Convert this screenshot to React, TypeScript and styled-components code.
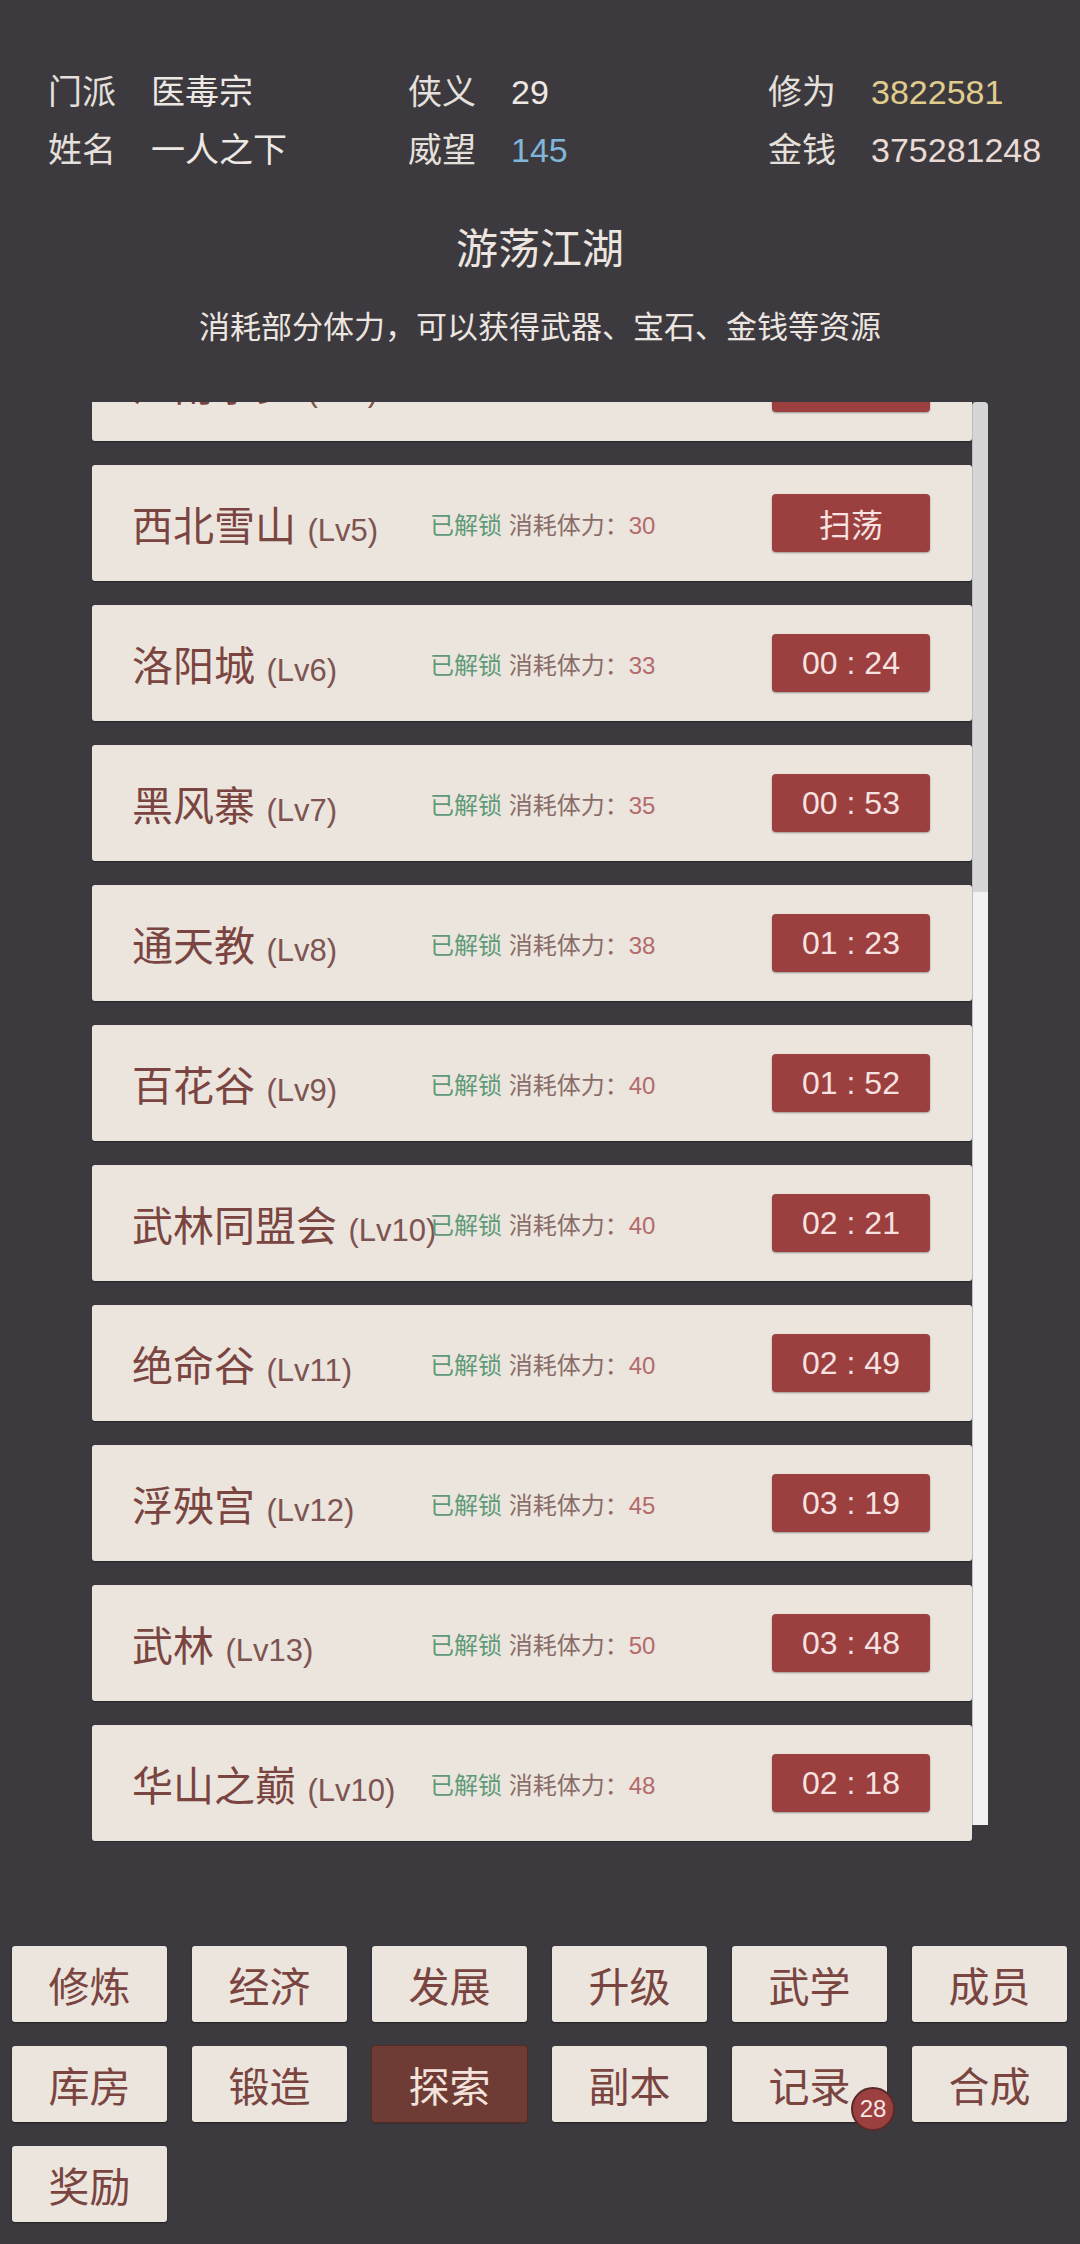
import { useLayoutEffect, useRef } from "react";
import styled, { createGlobalStyle } from "styled-components";

const GlobalStyle = createGlobalStyle`
	html, body {
		margin: 0;
		padding: 0;
		background: #3c3a3e;
	}

	body {
		font-family: "Liberation Sans", "Noto Sans CJK SC", sans-serif;
		color: #ebe4df;
	}
`;

const StyledPage = styled.div`
	width: 1080px;
	min-height: 2244px;
	padding-top: 63px;
	box-sizing: border-box;
`;

const StyledStats = styled.div`
	display: grid;
	grid-template-columns: repeat(3, 1fr);
	font-size: 34px;
	line-height: 58px;
`;

const StyledStat = styled.div`
	display: flex;
	padding-left: 48px;

	.label {
		width: 103px;
		color: #e6e0dc;
	}
`;

const StyledValue = styled.span<{ $tone?: string }>`
	color: ${(p) => p.$tone || "#eee8e4"};
`;

const StyledTitle = styled.h1`
	margin: 41px 0 0;
	font-size: 42px;
	font-weight: normal;
	line-height: 60px;
	text-align: center;
	color: #ece5e0;
`;

const StyledSubtitle = styled.p`
	margin: 23px 0 0;
	font-size: 31px;
	line-height: 50px;
	text-align: center;
	color: #ece5e0;
`;

const StyledListFrame = styled.div`
	display: flex;
	width: 896px;
	height: 1440px;
	margin: 49px 0 0 92px;
`;

const StyledViewport = styled.div`
	flex: 1;
	overflow: hidden;
`;

const StyledScrollbar = styled.div`
	display: flex;
	flex-direction: column;
	width: 16px;
	margin-bottom: 17px;
	background: #d6d6d6;
	border-radius: 4px 4px 0 0;
	border-left: 1px solid #bdbdbd;
	box-sizing: border-box;
`;

const StyledThumb = styled.div`
	flex: 1;
	margin-top: 490px;
	background: #f2f2f2;
`;

const StyledList = styled.div`
	display: flex;
	flex-direction: column;
	gap: 24px;
	padding-bottom: 1px;
`;

const StyledCard = styled.div`
	display: flex;
	align-items: center;
	height: 116px;
	padding: 0 42px 0 40px;
	background: #ebe5de;
	border-radius: 3px;
	box-shadow: 0 1px 2px rgba(0, 0, 0, 0.35);
	flex-shrink: 0;
`;

const StyledName = styled.div`
	width: 298px;
	flex-shrink: 0;
	white-space: nowrap;
	font-size: 41px;
	color: #7a4440;

	small {
		font-size: 31px;
		color: #7d5450;
	}
`;

const StyledInfo = styled.div`
	flex: 1;
	font-size: 24px;
	color: #8a6c68;
	white-space: nowrap;

	.open {
		color: #5e9a78;
	}
	.cost {
		color: #b46b6b;
	}
`;

const StyledAction = styled.button`
	width: 158px;
	height: 58px;
	border: none;
	border-radius: 4px;
	background: #9b3f3f;
	box-shadow: 0 1px 2px rgba(0, 0, 0, 0.35);
	color: #f6e2e0;
	font-family: inherit;
	font-size: 32px;
	padding: 0;
`;

const StyledNav = styled.div`
	display: grid;
	grid-template-columns: repeat(6, 155px);
	column-gap: 25px;
	row-gap: 24px;
	padding: 104px 12px 0;
`;

const StyledNavButton = styled.button<{ $active?: boolean }>`
	position: relative;
	height: 76px;
	padding: 0;
	border: none;
	border-radius: 3px;
	background: ${(p) => (p.$active ? "#6e3c35" : "#ebe5de")};
	box-shadow: ${(p) =>
		p.$active ? "0 0 0 1px #552b26, 0 1px 2px rgba(0,0,0,0.4)" : "0 1px 2px rgba(0, 0, 0, 0.45)"};
	color: ${(p) => (p.$active ? "#f3e3dc" : "#7a4440")};
	font-family: inherit;
	font-size: 41px;
`;

const StyledBadge = styled.span`
	position: absolute;
	right: -8px;
	bottom: -9px;
	width: 40px;
	height: 40px;
	border-radius: 50%;
	border: 2px solid #5a2a2a;
	background: #9b3f3f;
	color: #f6e6e4;
	font-size: 24px;
	line-height: 40px;
	text-align: center;
`;

const stats = [
	{ label: "门派", value: "医毒宗" },
	{ label: "侠义", value: "29" },
	{ label: "修为", value: "3822581", tone: "#e0cd8e" },
	{ label: "姓名", value: "一人之下" },
	{ label: "威望", value: "145", tone: "#7fb6da" },
	{ label: "金钱", value: "375281248", tone: "#eadad6" },
];

const places = [
	{ name: "新手村", lv: 1, cost: 10, action: "扫荡" },
	{ name: "青石镇", lv: 2, cost: 15, action: "扫荡" },
	{ name: "清风寨", lv: 3, cost: 20, action: "扫荡" },
	{ name: "江南水乡", lv: 4, cost: 25, action: "扫荡" },
	{ name: "西北雪山", lv: 5, cost: 30, action: "扫荡" },
	{ name: "洛阳城", lv: 6, cost: 33, action: "00 : 24" },
	{ name: "黑风寨", lv: 7, cost: 35, action: "00 : 53" },
	{ name: "通天教", lv: 8, cost: 38, action: "01 : 23" },
	{ name: "百花谷", lv: 9, cost: 40, action: "01 : 52" },
	{ name: "武林同盟会", lv: 10, cost: 40, action: "02 : 21" },
	{ name: "绝命谷", lv: 11, cost: 40, action: "02 : 49" },
	{ name: "浮殃宫", lv: 12, cost: 45, action: "03 : 19" },
	{ name: "武林", lv: 13, cost: 50, action: "03 : 48" },
	{ name: "华山之巅", lv: 10, cost: 48, action: "02 : 18" },
];

const navItems = [
	"修炼", "经济", "发展", "升级", "武学", "成员",
	"库房", "锻造", "探索", "副本", "记录", "合成",
	"奖励",
];

export default function App() {
	const viewport = useRef<HTMLDivElement>(null);

	useLayoutEffect(() => {
		if (viewport.current) viewport.current.scrollTop = viewport.current.scrollHeight;
	}, []);

	return (
		<StyledPage>
			<GlobalStyle />
			<StyledStats>
				{stats.map((s) => (
					<StyledStat key={s.label}>
						<span className="label">{s.label}</span>
						<StyledValue $tone={s.tone}>{s.value}</StyledValue>
					</StyledStat>
				))}
			</StyledStats>

			<StyledTitle>游荡江湖</StyledTitle>
			<StyledSubtitle>消耗部分体力，可以获得武器、宝石、金钱等资源</StyledSubtitle>

			<StyledListFrame>
				<StyledViewport ref={viewport}>
					<StyledList>
						{places.map((p) => (
							<StyledCard key={p.name}>
								<StyledName>
									{p.name} <small>(Lv{p.lv})</small>
								</StyledName>
								<StyledInfo>
									<span className="open">已解锁</span> 消耗体力：<span className="cost">{p.cost}</span>
								</StyledInfo>
								<StyledAction>{p.action}</StyledAction>
							</StyledCard>
						))}
					</StyledList>
				</StyledViewport>
				<StyledScrollbar>
					<StyledThumb />
				</StyledScrollbar>
			</StyledListFrame>

			<StyledNav>
				{navItems.map((item) => (
					<StyledNavButton key={item} $active={item === "探索"}>
						{item}
						{item === "记录" && <StyledBadge>28</StyledBadge>}
					</StyledNavButton>
				))}
			</StyledNav>
		</StyledPage>
	);
}
